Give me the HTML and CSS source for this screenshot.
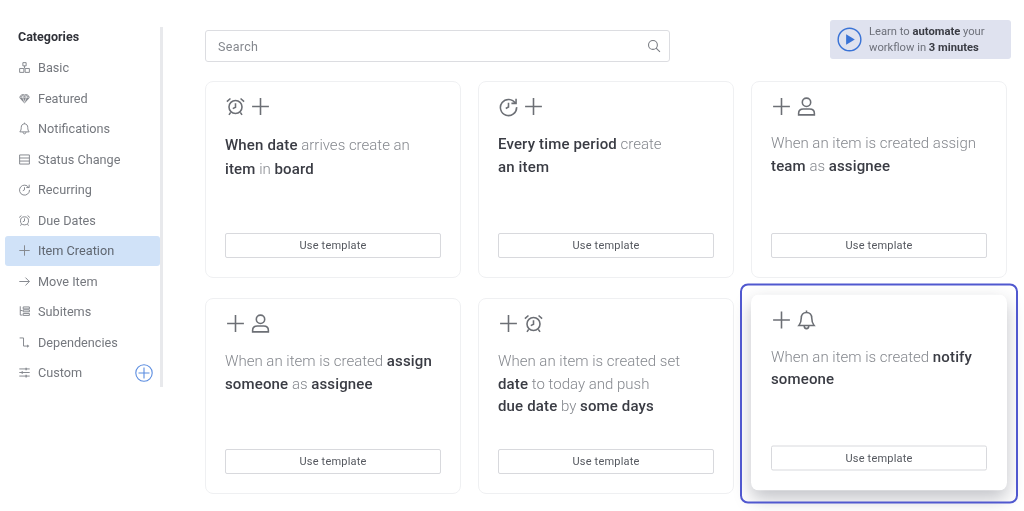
FILE: index.html
```html
<!DOCTYPE html>
<html lang="en">
<head>
<meta charset="utf-8">
<title>Automation templates</title>
<link rel="stylesheet" href="styles.css">
</head>
<body>
<svg class="defs" width="0" height="0" aria-hidden="true">
  <symbol id="i-plus" viewBox="0 0 20 20"><path d="M10 2v16M2 10h16"/></symbol>
  <symbol id="i-alarm" viewBox="0 0 20 20"><circle cx="10" cy="10.500" r="6.200"/><path d="M10 6.800v4l-2.600 1.200M1.800 5.400 5.200 2.400M18.200 5.400 14.800 2.400M5.400 15.600 3.800 18M14.600 15.600 16.200 18"/></symbol>
  <symbol id="i-recur" viewBox="0 0 20 20"><path d="M16.600 7A7.700 7.700 0 1 0 17.700 10.600M17.200 2.600V7h-4.400M10 6.500v4l-2.600 1.400"/></symbol>
  <symbol id="i-person" viewBox="0 0 20 20"><circle cx="10" cy="6" r="4"/><path d="M2.500 18v-1.500C2.500 13.500 5 12.400 7 12.400h6c2 0 4.500 1.100 4.500 4.100V18z"/></symbol>
  <symbol id="i-bell" viewBox="0 0 20 20"><path d="M10 2.800c-3.200 0-5 2.400-5 5.400 0 3.600-.8 5.400-2.200 7h14.400c-1.400-1.600-2.200-3.400-2.200-7 0-3-1.800-5.400-5-5.400zM10 1v1.800M7.800 15.500c0 1.800 1 2.700 2.200 2.700s2.200-.9 2.200-2.700"/></symbol>
  <symbol id="i-basic" viewBox="0 0 20 20"><path d="M7.500 2.500h5v5h-5zM2.500 11.500h6.500v6h-6.500zM11 11.500h6.500v6H11zM10 7.500v4"/></symbol>
  <symbol id="i-gem" viewBox="0 0 20 20"><path class="fill" d="M5.500 3.500h9L18.500 8 10 17.500 1.500 8z"/><path class="knock" d="M2 8h16M7 8l3 8 3-8M5.500 4 7 8l3-4 3 4 1.500-4"/></symbol>
  <symbol id="i-rows" viewBox="0 0 20 20"><path d="M2.500 3h15v14h-15zM2.500 7.700h15M2.500 12.400h15"/></symbol>
  <symbol id="i-arrow" viewBox="0 0 20 20"><path d="M2 10h15.500M11.500 4l6 6-6 6"/></symbol>
  <symbol id="i-sub" viewBox="0 0 20 20"><path d="M3.500 2v13.500h3.500M3.500 8.500h3.500M8 3h9.500v3H8zM8 7.500h9.500v3H8zM8 13h9.500v3H8z"/></symbol>
  <symbol id="i-dep" viewBox="0 0 20 20"><path d="M2.500 3h6v12.500h6"/><path class="fill" d="M14 13l3.500 2.500L14 18z"/></symbol>
  <symbol id="i-custom" viewBox="0 0 20 20"><path d="M2 4.500h16M2 10h16M2 15.500h16"/><path class="fill" d="M11.500 2.500h2v4h-2zM5.500 8h2v4h-2zM11.500 13.500h2v4h-2z"/></symbol>
  <symbol id="i-search" viewBox="0 0 20 20"><circle cx="8.500" cy="8.500" r="6.300"/><path d="M13 13l5.500 5.500"/></symbol>
</svg>

<div class="page">
  <aside class="sidebar">
    <h2 class="sidebar-title">Categories</h2>
    <ul class="cat-list">
      <li class="cat"><svg class="cat-icon"><use href="#i-basic"/></svg>Basic</li>
      <li class="cat"><svg class="cat-icon"><use href="#i-gem"/></svg>Featured</li>
      <li class="cat"><svg class="cat-icon"><use href="#i-bell"/></svg>Notifications</li>
      <li class="cat"><svg class="cat-icon"><use href="#i-rows"/></svg>Status Change</li>
      <li class="cat"><svg class="cat-icon"><use href="#i-recur"/></svg>Recurring</li>
      <li class="cat"><svg class="cat-icon"><use href="#i-alarm"/></svg>Due Dates</li>
      <li class="cat cat-active"><svg class="cat-icon"><use href="#i-plus"/></svg>Item Creation</li>
      <li class="cat"><svg class="cat-icon"><use href="#i-arrow"/></svg>Move Item</li>
      <li class="cat"><svg class="cat-icon"><use href="#i-sub"/></svg>Subitems</li>
      <li class="cat"><svg class="cat-icon"><use href="#i-dep"/></svg>Dependencies</li>
      <li class="cat"><svg class="cat-icon"><use href="#i-custom"/></svg>Custom
        <svg class="add-btn" viewBox="0 0 18 18"><circle cx="9" cy="9" r="8.200"/><path d="M9 3.500v11M3.500 9h11"/></svg>
      </li>
    </ul>
  </aside>

  <main class="main">
    <div class="topbar">
      <div class="search">
        <span>Search</span>
        <svg class="search-icon"><use href="#i-search"/></svg>
      </div>
      <div class="promo">
        <svg class="play" viewBox="0 0 26 26"><circle cx="13" cy="13" r="11.800"/><path d="M9.500 7.500 18.500 13l-9 5.500z"/></svg>
        <p>Learn to <b>automate</b> your<br>workflow in <b>3 minutes</b></p>
      </div>
    </div>

    <div class="grid">
      <article class="card">
        <div class="icons"><svg class="icon"><use href="#i-alarm"/></svg><svg class="icon"><use href="#i-plus"/></svg></div>
        <p class="desc desc-wide"><b>When date</b> arrives create an<br><b>item</b> in <b>board</b></p>
        <button class="use">Use template</button>
      </article>
      <article class="card">
        <div class="icons"><svg class="icon"><use href="#i-recur"/></svg><svg class="icon"><use href="#i-plus"/></svg></div>
        <p class="desc"><b>Every time period</b> create<br><b>an item</b></p>
        <button class="use">Use template</button>
      </article>
      <article class="card">
        <div class="icons"><svg class="icon"><use href="#i-plus"/></svg><svg class="icon"><use href="#i-person"/></svg></div>
        <p class="desc desc-up">When an item is created assign<br><b>team</b> as <b>assignee</b></p>
        <button class="use">Use template</button>
      </article>
      <article class="card card-low">
        <div class="icons"><svg class="icon"><use href="#i-plus"/></svg><svg class="icon"><use href="#i-person"/></svg></div>
        <p class="desc desc-low">When an item is created <b>assign</b><br><b>someone</b> as <b>assignee</b></p>
        <button class="use">Use template</button>
      </article>
      <article class="card card-low">
        <div class="icons"><svg class="icon"><use href="#i-plus"/></svg><svg class="icon"><use href="#i-alarm"/></svg></div>
        <p class="desc desc-low desc-three">When an item is created set<br><b>date</b> to today and push<br><b>due date</b> by <b>some days</b></p>
        <button class="use">Use template</button>
      </article>
      <article class="card card-low card-lifted">
        <div class="icons"><svg class="icon"><use href="#i-plus"/></svg><svg class="icon"><use href="#i-bell"/></svg></div>
        <p class="desc desc-tight">When an item is created <b>notify</b><br><b>someone</b></p>
        <button class="use">Use template</button>
        <span class="highlight"></span>
      </article>
    </div>
  </main>
</div>
</body>
</html>
```

FILE: styles.css
```css
* { box-sizing: border-box; }
html, body { margin: 0; height: 100%; overflow: hidden; background: #fff; }
body { font-family: Roboto, "Liberation Sans", sans-serif; color: #3a3c44; }
.defs { position: absolute; }
symbol path, symbol circle { fill: none; stroke: currentColor; stroke-width: 1.5; }
symbol .fill { fill: currentColor; stroke: none; }
symbol .knock { stroke: #fff; stroke-width: 1; }

.page { display: flex; align-items: flex-start; height: 511px; padding-top: 20px; filter: blur(.35px); }

.sidebar {
  width: 163px;
  height: 360px;
  margin-top: 7px;
  padding: 1px 0 0 5px;
  border-right: 3px solid #e8e9ec;
  flex: none;
}
.sidebar-title {
  margin: 0;
  padding-left: 13px;
  font-size: 12.500px;
  line-height: 18px;
  font-weight: 700;
  color: #2f3138;
}
.cat-list { list-style: none; margin: 6.500px 0 0; padding: 0; }
.cat {
  display: flex;
  align-items: center;
  height: 30.500px;
  padding-left: 13px;
  font-size: 12.700px;
  color: #75787e;
}
.cat-active { background: #d0e2f8; border-radius: 3px; color: #5f6670; }
.cat-icon { width: 13px; height: 13px; margin-right: 7px; flex: none; color: #85888e; }
.add-btn {
  width: 18px;
  height: 18px;
  margin-left: auto;
  margin-right: 7px;
  fill: none;
  stroke: #5b8de0;
  stroke-width: 1.100;
}

.main { margin-left: 42px; width: 806px; }

.topbar { display: flex; align-items: flex-start; height: 61px; }
.search {
  display: flex;
  align-items: center;
  justify-content: space-between;
  width: 465px;
  height: 32px;
  margin-top: 10px;
  padding: 0 8px 0 12px;
  border: 1px solid #dcdde1;
  border-radius: 3px;
  font-size: 12.500px;
  letter-spacing: .3px;
  color: #85888e;
}
.search-icon { width: 14px; height: 14px; color: #777a80; }
.promo {
  display: flex;
  align-items: center;
  width: 181px;
  height: 39px;
  margin-left: 160px;
  padding-left: 7px;
  background: #dfe2ef;
  border-radius: 3px;
}
.play { width: 25px; height: 25px; margin-right: 7px; flex: none; }
.play circle { fill: none; stroke: #3a73d6; stroke-width: 1.500; }
.play path { fill: #3a73d6; }
.promo p { margin: 0; font-size: 11.200px; line-height: 16px; color: #6d707a; }
.promo b { color: #3a3c44; }

.grid {
  display: grid;
  grid-template-columns: repeat(3, 256px);
  grid-auto-rows: 196.500px;
  column-gap: 17px;
  row-gap: 20px;
}
.card {
  position: relative;
  display: flex;
  flex-direction: column;
  padding: 14px 19px 18.500px;
  border: 1px solid #eff0f2;
  border-radius: 8px;
  background: #fff;
}
.card-low { padding-bottom: 19.500px; }
.icons { display: flex; gap: 4px; height: 21px; }
.icon { width: 21px; height: 21px; color: #6c6f75; }
.desc {
  flex: 1;
  margin: 16px 0 0;
  font-size: 15px;
  line-height: 23px;
  font-weight: 300;
  color: #85888e;
}
.desc b { font-weight: 500; letter-spacing: .15px; color: #3a3c44; }
.desc-wide { line-height: 24px; }
.desc-up { margin-top: 15px; }
.desc-low { margin-top: 16.500px; }
.desc-three { line-height: 22.500px; }
.desc-tight { margin-top: 15px; line-height: 22px; }
.use {
  width: 100%;
  height: 25px;
  padding: 0;
  background: #fff;
  border: 1px solid #d8d9dd;
  border-radius: 2px;
  font: 400 11px Roboto, "Liberation Sans", sans-serif;
  letter-spacing: .2px;
  color: #55585f;
}
.card-lifted {
  transform: translateY(-3.500px);
  border-color: transparent;
  box-shadow: 0 8px 18px rgba(40, 42, 60, .28);
}
.highlight {
  position: absolute;
  left: -12px;
  top: -12px;
  width: 278px;
  height: 220px;
  border: 2.500px solid #5058cf;
  border-radius: 8px;
  pointer-events: none;
}
```
